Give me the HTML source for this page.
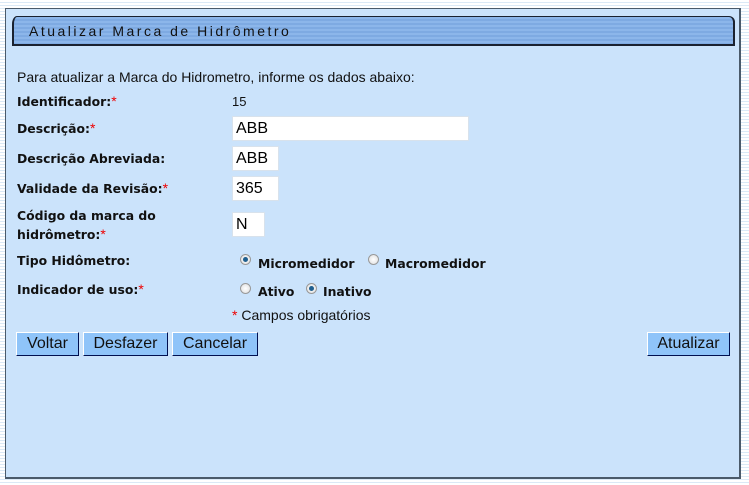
<!DOCTYPE html>
<html><head><meta charset="utf-8"><style>
*{margin:0;padding:0;box-sizing:border-box}
html,body{width:749px;height:485px;overflow:hidden}
body{background:repeating-linear-gradient(#fff 0 2px,#dbe9f6 2px 3px);position:relative;font-family:"Liberation Sans",Arial,sans-serif}
.panel{position:absolute;left:5px;top:8px;width:736px;height:471px;background:#cbe3fb;border:1px solid #4a5a6a;border-right-width:2px;border-bottom-width:2px}
.hdr{position:absolute;left:12px;top:16px;width:723px;height:30px;background:repeating-linear-gradient(#8cb6ea 0 2px,#7eaae2 2px 4px);border:2px solid #1a2230;border-top-width:1px;border-top-left-radius:5px 8px;border-top-right-radius:6px}
.hdr span{position:absolute;left:15px;top:6px;font-size:14px;letter-spacing:2.5px;color:#111}
.t{position:absolute;font-size:14px;color:#111;white-space:nowrap}
.l{position:absolute;font-family:"DejaVu Sans",Verdana,sans-serif;font-weight:bold;font-size:12.4px;color:#111;white-space:nowrap;line-height:19px}
.r{color:#e00;font-family:"Liberation Sans",sans-serif;font-weight:normal;font-size:14px}
.in{position:absolute;background:#fff;border:1px solid #d8e2ec;font-size:16px;padding:2px 3px;line-height:19px;color:#000}
.btn{position:absolute;top:332px;height:24px;background:#8fc4f9;border:1px solid;border-color:#fff #001050 #001050 #fff;font-size:16px;text-align:center;line-height:21px;color:#111}
.rad{position:absolute;width:11px;height:11px;border-radius:50%;border:1px solid #999;background:radial-gradient(#fff,#ddd)}
.rad.on::after{content:"";position:absolute;left:2px;top:2px;width:5px;height:5px;border-radius:50%;background:#1f5f8f}
</style></head><body>
<div class="panel"></div>
<div class="hdr"><span>Atualizar Marca de Hidrômetro</span></div>
<div class="t" style="left:17px;top:69px">Para atualizar a Marca do Hidrometro, informe os dados abaixo:</div>
<div class="l" style="left:17px;top:92px">Identificador:<span class="r">*</span></div>
<div class="t" style="left:232px;top:94px;font-size:13px">15</div>
<div class="l" style="left:17px;top:119px">Descrição:<span class="r">*</span></div>
<div class="in" style="left:232px;top:116px;width:237px;height:25px">ABB</div>
<div class="l" style="left:17px;top:149px">Descrição Abreviada:</div>
<div class="in" style="left:232px;top:146px;width:47px;height:25px">ABB</div>
<div class="l" style="left:17px;top:179px">Validade da Revisão:<span class="r">*</span></div>
<div class="in" style="left:232px;top:176px;width:47px;height:25px">365</div>
<div class="l" style="left:17px;top:206px">Código da marca do<br>hidrômetro:<span class="r">*</span></div>
<div class="in" style="left:232px;top:212px;width:33px;height:25px">N</div>
<div class="l" style="left:17px;top:251px">Tipo Hidômetro:</div>
<div class="rad on" style="left:240px;top:254px"></div>
<div class="l" style="left:258px;top:254px">Micromedidor</div>
<div class="rad" style="left:368px;top:254px"></div>
<div class="l" style="left:385px;top:254px">Macromedidor</div>
<div class="l" style="left:17px;top:280px">Indicador de uso:<span class="r">*</span></div>
<div class="rad" style="left:240px;top:283px"></div>
<div class="l" style="left:258px;top:282px">Ativo</div>
<div class="rad on" style="left:306px;top:283px"></div>
<div class="l" style="left:323px;top:282px">Inativo</div>
<div class="t" style="left:232px;top:307px;font-size:14px"><span style="color:#e00">*</span> Campos obrigatórios</div>
<div class="btn" style="left:16px;width:63px">Voltar</div>
<div class="btn" style="left:83px;width:85px">Desfazer</div>
<div class="btn" style="left:172px;width:86px">Cancelar</div>
<div class="btn" style="left:647px;width:83px">Atualizar</div>
</body></html>
